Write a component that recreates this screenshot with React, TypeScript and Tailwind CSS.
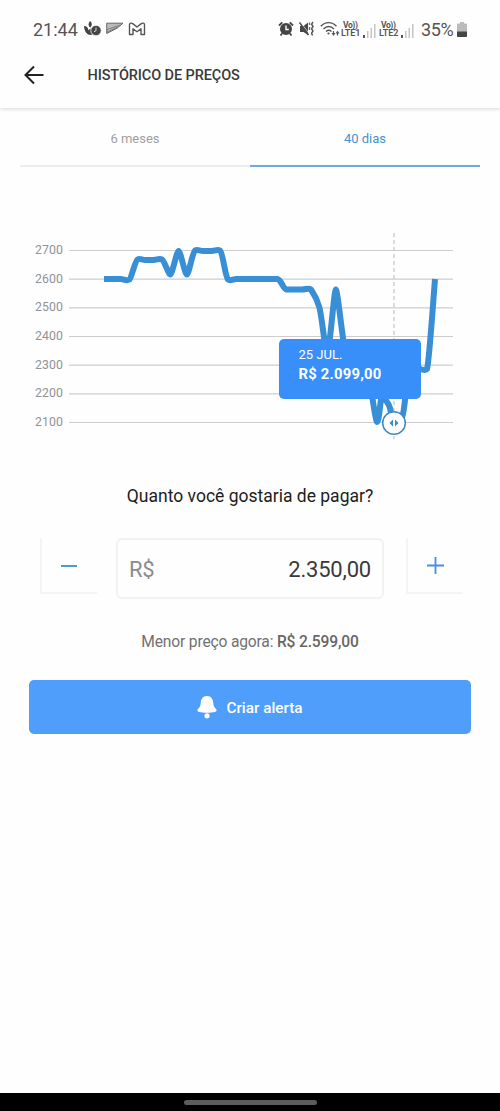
import { useState } from "react";

const GRID = [2700, 2600, 2500, 2400, 2300, 2200, 2100];

const LINE =
  "M104 112H120.5C124 112 126 114.5 129.5 112.5C131.5 111 135 94 137.5 92.5C140 91 142 93 145.5 93H153.5C157 93 159 91 162 92.5C164.500 94 168.500 107.500 170.300 107.500C172.300 107.500 176.600 84 178.600 84C180.600 84 184.800 107.500 186.800 107.500C188.800 107.500 192.500 85.500 195 83.500C197.500 82 199.500 84 203.300 84H211.600C215 84 217.500 82 220 83.500C223 86 225 109 228 112.500C230.500 114.500 233 112 236.500 112H277.500C281 112 283 122.500 287 122.500H302C306 122.500 308.500 120.500 311 122.500C314 127 317 132 319.300 140C322 150 324.500 180 327.300 188C330 180 334.200 122.500 335.800 122.500C337.400 122.500 341 159 344.300 180C350 215 356 180 361 180C367 180 374.500 255 377.200 255C379.500 255 380.500 225 382.800 227.500C385 234 388 234 390 241C391.500 248 392.500 255 393.800 255C401 255 403 256 405.500 228C408 208 411 201 418.500 201C422 203 425 204 427 202C429 196 432.500 144 435 112";

function AlarmIcon() {
  return (
    <svg width="16" height="16" viewBox="0 0 16 16">
      <path d="M1 4.500L4.300 1.300M15 4.500L11.700 1.300M4 12.500L2.500 14.500M12 12.500L13.500 14.500" stroke="#444" strokeWidth="1.800" />
      <circle cx="8" cy="8" r="6" fill="#444" />
      <path d="M8 4.500V8.500H10.800" stroke="#fff" strokeWidth="1.400" fill="none" />
    </svg>
  );
}

function MuteIcon() {
  return (
    <svg width="16" height="16" viewBox="0 0 16 16">
      <path d="M1 5H4.500L9 1.500V14L4.500 11H1Z" fill="#484848" />
      <path d="M1.500 1L10 12.500" stroke="#fefefe" strokeWidth="0.700" />
      <path d="M0.500 1.500L9.500 14" stroke="#484848" strokeWidth="1.500" />
      <path d="M10.500 1.500V4M10.500 6V9" stroke="#666" strokeWidth="1.300" />
      <path d="M14 1L12.600 3.200L14 5.500L12.600 7.800L14 10L12.600 12.200L13.500 14.500" fill="none" stroke="#555" strokeWidth="1.500" />
    </svg>
  );
}

function WifiIcon() {
  return (
    <svg width="20" height="16" viewBox="0 0 20 16" fill="none" stroke="#555" strokeWidth="1.400">
      <path d="M0.800 5.200C5.300 0.400 12 0.400 16.500 5.200M3.500 8C6.800 4.700 10.800 4.700 14 8M6 10.500C7.800 8.900 9.800 8.900 11.500 10.500" />
      <circle cx="8.500" cy="12.500" r="1.100" fill="#555" stroke="none" />
      <path d="M13.500 10V13.500M17.500 14.500V11" strokeWidth="1.200" />
      <path d="M11.500 12L13.500 15L15.500 12ZM15.700 12.500L17.500 9.500L19.500 12.500Z" fill="#555" stroke="none" />
    </svg>
  );
}

function Signal({ label }: { label: string }) {
  return (
    <div className="flex items-end">
      <div className="flex w-5 flex-col whitespace-nowrap text-[#555]">
        <span className="pl-0.5 text-[8.500px] leading-[8px] font-bold tracking-[-0.4px]">Vo))</span>
        <span className="text-[9px] leading-[9px] font-semibold tracking-[-0.1px]">{label}</span>
      </div>
      <svg width="15" height="15" viewBox="0 0 15 15">
        <rect x="2" y="12" width="2" height="3" fill="#555" />
        <rect x="6" y="8" width="1.500" height="7" fill="#c4c4c4" />
        <rect x="9.500" y="5" width="1.500" height="10" fill="#c4c4c4" />
        <rect x="13" y="1" width="1.500" height="14" fill="#c4c4c4" />
      </svg>
    </div>
  );
}

function StatusBar() {
  return (
    <div className="flex h-[46px] items-center pt-3 pl-[33px] text-[#555]">
      <span className="w-[46px] pt-px text-[18px] leading-5">21:44</span>
      <div className="ml-[5px] flex items-center">
        <svg width="18" height="16" viewBox="0 0 18 16">
          <path d="M6 0C8.500 2 8.200 4.500 6.200 6.500C4 5 4 2.500 6 0Z" fill="#444" />
          <path d="M0 5C3 5 4.200 7 4.500 9.500C5.500 8 6.500 7.500 8 7.500V13.800C4 14.500 0.500 12 0 5Z" fill="#444" />
          <circle cx="12" cy="9.500" r="5.200" fill="#444" stroke="#fff" strokeWidth="0.800" />
          <path d="M12 6.500V9.700L10 10.700" stroke="#ddd" strokeWidth="1" fill="none" />
        </svg>
        <svg className="ml-1" width="18" height="14" viewBox="0 0 18 14">
          <path d="M0.700 1.200H17L11 6.200L0.700 11.500Z" fill="#bbb" stroke="#666" strokeWidth="1" />
          <path d="M1 7.500L14 3.200M1 10L12 5" stroke="#777" strokeWidth="0.900" />
        </svg>
        <svg className="ml-1" width="18" height="14" viewBox="0 0 18 14">
          <path d="M1.500 12.500V2.800C1.500 1 3.500 0.700 4.700 1.600L9 5L13.300 1.600C14.500 0.700 16.500 1 16.500 2.800V12.500H13V6.800L9 9.800L5 6.800V12.500Z" fill="#fff" stroke="#555" strokeWidth="1.400" strokeLinejoin="round" />
        </svg>
      </div>
      <div className="ml-[132px] flex items-center">
        <AlarmIcon />
        <div className="ml-[5px]"><MuteIcon /></div>
        <div className="ml-[5px]"><WifiIcon /></div>
        <div className="ml-px"><Signal label="LTE1" /></div>
        <div className="ml-[3px]"><Signal label="LTE2" /></div>
      </div>
      <span className="ml-[7px] w-[34px] pt-px text-[18px] leading-5 tracking-[-0.4px]">35%</span>
      <svg className="ml-0.5" width="10" height="15" viewBox="0 0 10 15">
        <path d="M3 0H7V1.500H9C9.600 1.500 10 2 10 2.500V10H0V2.500C0 2 0.400 1.500 1 1.500H3Z" fill="#bbb" />
        <path d="M0 9.500H10V14C10 14.600 9.600 15 9 15H1C0.400 15 0 14.600 0 14Z" fill="#444" />
      </svg>
    </div>
  );
}

function PriceChart() {
  return (
    <div className="relative h-[303px]">
      <svg width="500" height="303" viewBox="0 0 500 303">
        {GRID.map((value, i) => (
          <g key={value}>
            <line x1="69" x2="453" y1={83.500 + i * 28.670} y2={83.500 + i * 28.670} stroke="#cdcdcd" strokeWidth="1.200" />
            <text x="35" y={87 + i * 28.670} fontSize="12.300" fill="#909398" textLength="28">{value}</text>
          </g>
        ))}
        <path d="M394 66V272" stroke="#c8c8c8" strokeWidth="1.300" strokeDasharray="4 3" />
        <path d={LINE} fill="none" stroke="#388fd5" strokeWidth="6" strokeLinejoin="round" />
        <circle cx="394" cy="256" r="11.300" fill="#fff" stroke="#3d89c2" strokeWidth="1.500" />
        <path d="M393 252.500V259.500L389.500 256ZM395 252.500V259.500L398.500 256Z" fill="#3d89c2" />
      </svg>
      <div className="absolute top-[172px] left-[279px] h-[60px] w-[142px] rounded-[5px] bg-[#388ffa] pt-[7px] pl-[19.500px] text-white">
        <p className="text-[13px] leading-[18px]">25 JUL.</p>
        <p className="text-[14.800px] leading-5 font-bold tracking-[0.22px]">R$ 2.099,00</p>
      </div>
    </div>
  );
}

export default function App() {
  const [tab, setTab] = useState(1);
  const [price, setPrice] = useState(2350);

  return (
    <div className="flex h-[1111px] w-[500px] flex-col overflow-hidden bg-[#fefefe] font-['Roboto',sans-serif]">
      <header className="h-[108px] shrink-0 bg-[#fefefe] shadow-[0_1px_4px_rgba(0,0,0,0.16)]">
        <StatusBar />
        <div className="flex h-[58px] items-center pl-6">
          <svg width="21" height="20" viewBox="0 0 21 20" fill="none" stroke="#222" strokeWidth="2">
            <path d="M19.500 10H2M10 1.500L1.500 10L10 18.500" />
          </svg>
          <h1 className="ml-[42.500px] pt-px text-[14.500px] font-medium tracking-[-0.1px] text-[#3a3a3a]">HISTÓRICO DE PREÇOS</h1>
        </div>
      </header>

      {/* Period tabs */}
      <div className="mx-5 flex h-[59px] shrink-0">
        {["6 meses", "40 dias"].map((label, i) => (
          <button
            key={label}
            onClick={() => setTab(i)}
            className={`flex-1 border-b-2 pt-1 text-[13px] ${
              tab === i ? "border-[#70a9df] text-[#4592ce]" : "border-[#ededed] text-[#a0a0a0]"
            }`}
          >
            {label}
          </button>
        ))}
      </div>

      <PriceChart />

      <h2 className="mt-[14px] text-center text-[17.500px] leading-6 text-[#1c1c1c]">
        Quanto você gostaria de pagar?
      </h2>

      {/* Target price */}
      <div className="mt-[30px] flex items-start pl-10">
        <button onClick={() => setPrice(price - 50)} className="flex h-14 w-[57px] items-center justify-center border-b-2 border-l-2 border-[#f4f4f4] pr-0.5 pt-0.5">
          <svg width="16" height="16" viewBox="0 0 16 16">
            <path d="M0 8H16" stroke="#4b9bd8" strokeWidth="2" />
          </svg>
        </button>
        <div className="ml-[19px] flex h-[61px] w-[268px] items-center justify-between rounded-md border-2 border-[#f2f2f2] px-[11px] pt-0.5 text-[22px] tracking-[-0.2px]">
          <span className="text-[#8b8b8b]">R$</span>
          <span className="text-[#3a3a3a]">{price.toLocaleString("de-DE", { minimumFractionDigits: 2 })}</span>
        </div>
        <button onClick={() => setPrice(price + 50)} className="ml-[22px] flex h-14 w-[57px] items-center justify-center border-b-2 border-l-2 border-[#f4f4f4]">
          <svg width="17" height="17" viewBox="0 0 17 17">
            <path d="M0 8.500H17M8.500 0V17" stroke="#4292e0" strokeWidth="1.800" />
          </svg>
        </button>
      </div>

      <p className="mt-[31px] text-center text-[15.600px] leading-6 tracking-[-0.17px] text-[#717171]">
        Menor preço agora: <span className="font-medium text-[#666]">R$ 2.599,00</span>
      </p>

      <button className="mx-[29px] mt-[26px] flex h-[54px] shrink-0 items-center justify-center rounded-[5px] bg-[#4f9efb] text-[15.300px] font-medium text-white">
        <svg className="mr-[9px]" width="20" height="23" viewBox="0 0 20 23" fill="currentColor">
          <path d="M10 0C14.500 0 16 3.500 16.200 6.500C16.400 10 17.300 11.500 19 13C20.200 14.300 19.500 15.700 17.800 16C14 17 6 17 2.200 16C0.500 15.700 -0.200 14.300 1 13C2.700 11.500 3.600 10 3.800 6.500C4 3.500 5.500 0 10 0Z" />
          <circle cx="10" cy="19.800" r="2.600" />
        </svg>
        <span className="pt-0.5">Criar alerta</span>
      </button>

      {/* Gesture bar */}
      <div className="mt-auto flex h-[18px] shrink-0 items-center justify-center bg-black">
        <div className="h-[5px] w-[133px] rounded-full bg-[#5c5c5c]" />
      </div>
    </div>
  );
}
